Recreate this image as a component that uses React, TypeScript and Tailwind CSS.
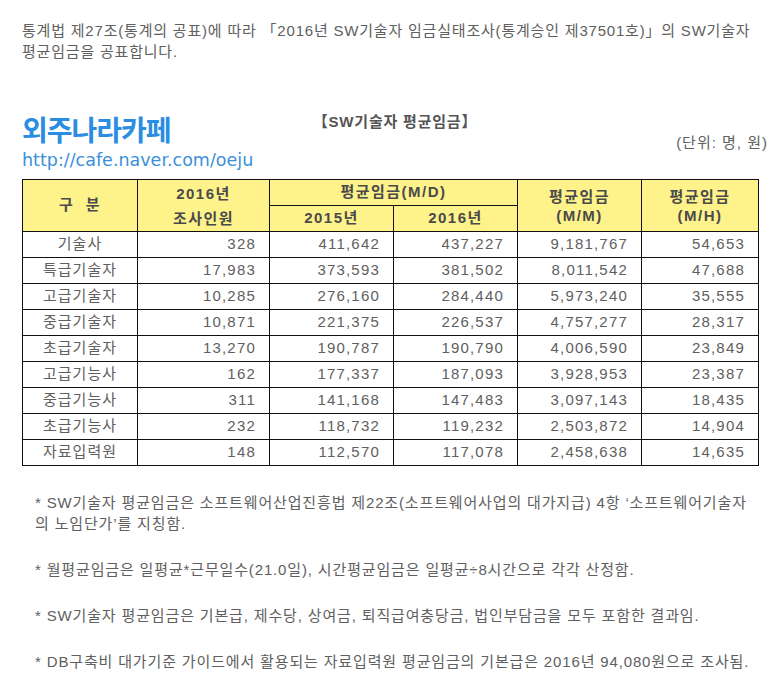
const rows: [string, string, string, string, string, string][] = [
  ["기술사", "328", "411,642", "437,227", "9,181,767", "54,653"],
  ["특급기술자", "17,983", "373,593", "381,502", "8,011,542", "47,688"],
  ["고급기술자", "10,285", "276,160", "284,440", "5,973,240", "35,555"],
  ["중급기술자", "10,871", "221,375", "226,537", "4,757,277", "28,317"],
  ["초급기술자", "13,270", "190,787", "190,790", "4,006,590", "23,849"],
  ["고급기능사", "162", "177,337", "187,093", "3,928,953", "23,387"],
  ["중급기능사", "311", "141,168", "147,483", "3,097,143", "18,435"],
  ["초급기능사", "232", "118,732", "119,232", "2,503,872", "14,904"],
  ["자료입력원", "148", "112,570", "117,078", "2,458,638", "14,635"],
];

const notes = [
  ["* SW기술자 평균임금은 소프트웨어산업진흥법 제22조(소프트웨어사업의 대가지급) 4항 ‘소프트웨어기술자", "의 노임단가’를 지칭함."],
  ["* 월평균임금은 일평균*근무일수(21.0일), 시간평균임금은 일평균÷8시간으로 각각 산정함."],
  ["* SW기술자 평균임금은 기본급, 제수당, 상여금, 퇴직급여충당금, 법인부담금을 모두 포함한 결과임."],
  ["* DB구축비 대가기준 가이드에서 활용되는 자료입력원 평균임금의 기본급은 2016년 94,080원으로 조사됨."],
];

const th = "border border-[#111] bg-[#fef28a] font-bold text-[#4a4a4a] text-center p-0 tracking-[1.5px]";
const td = "border border-[#111] h-[26px] p-0 pr-[13px] text-right tracking-[1.2px]";

export default function App() {
  return (
    <div className="w-[780px] h-[680px] overflow-hidden bg-white text-[#606060] text-[15px] font-['Liberation_Sans','Noto_Sans_CJK_KR',sans-serif]">
      {/* intro */}
      <p className="pl-[22px] pt-[20px] leading-[21px] whitespace-nowrap tracking-[0.8px]">
        통계법 제27조(통계의 공표)에 따라 「2016년 SW기술자 임금실태조사(통계승인 제37501호)」의 SW기술자
        <br />
        평균임금을 공표합니다.
      </p>

      {/* heading row */}
      <div className="mt-[54px] ml-[22px] w-[746px] grid grid-cols-[1fr_auto_1fr]">
        <div>
          <div className="text-[28px] leading-[32px] font-bold tracking-[-1px] text-[#2b8de2]">외주나라카페</div>
          <div className="text-[17.5px] leading-[24px] text-[#3b90da] font-['DejaVu_Sans',sans-serif]">
            http://cafe.naver.com/oeju
          </div>
        </div>
        <div className="-mt-[4px] leading-[20px] font-bold text-[#555] tracking-[0.8px]">【SW기술자 평균임금】</div>
        <div className="mt-[17px] leading-[20px] text-right tracking-[1px]">(단위: 명, 원)</div>
      </div>

      {/* table */}
      <table className="mt-[7px] ml-[22px] w-[736px] table-fixed border-collapse">
        <colgroup>
          <col className="w-[115px]" />
          <col className="w-[132px]" />
          <col className="w-[124px]" />
          <col className="w-[124px]" />
          <col className="w-[124px]" />
          <col className="w-[117px]" />
        </colgroup>
        <thead>
          <tr className="h-[26px]">
            <th rowSpan={2} className={th}>구&nbsp;&nbsp;분</th>
            <th rowSpan={2} className={`${th} leading-[25px]`}>
              2016년
              <br />
              조사인원
            </th>
            <th colSpan={2} className={th}>평균임금(M/D)</th>
            <th rowSpan={2} className={`${th} leading-[19px]`}>
              평균임금
              <br />
              (M/M)
            </th>
            <th rowSpan={2} className={`${th} leading-[19px]`}>
              평균임금
              <br />
              (M/H)
            </th>
          </tr>
          <tr className="h-[26px]">
            <th className={th}>2015년</th>
            <th className={th}>2016년</th>
          </tr>
        </thead>
        <tbody>
          {rows.map((r) => (
            <tr key={r[0]}>
              <td className="border border-[#111] h-[26px] p-0 text-center tracking-[1px]">{r[0]}</td>
              <td className={td}>{r[1]}</td>
              <td className={td}>{r[2]}</td>
              <td className={td}>{r[3]}</td>
              <td className={td}>{r[4]}</td>
              <td className={td}>{r[5]}</td>
            </tr>
          ))}
        </tbody>
      </table>

      {/* footnotes */}
      <div className="mt-[26px] pl-[35px] flex flex-col gap-[25px] leading-[21px] whitespace-nowrap tracking-[0.85px]">
        {notes.map((n, i) => (
          <p key={i}>
            {n.map((line, j) => (
              <span key={j} className="block">
                {line}
              </span>
            ))}
          </p>
        ))}
      </div>
    </div>
  );
}
